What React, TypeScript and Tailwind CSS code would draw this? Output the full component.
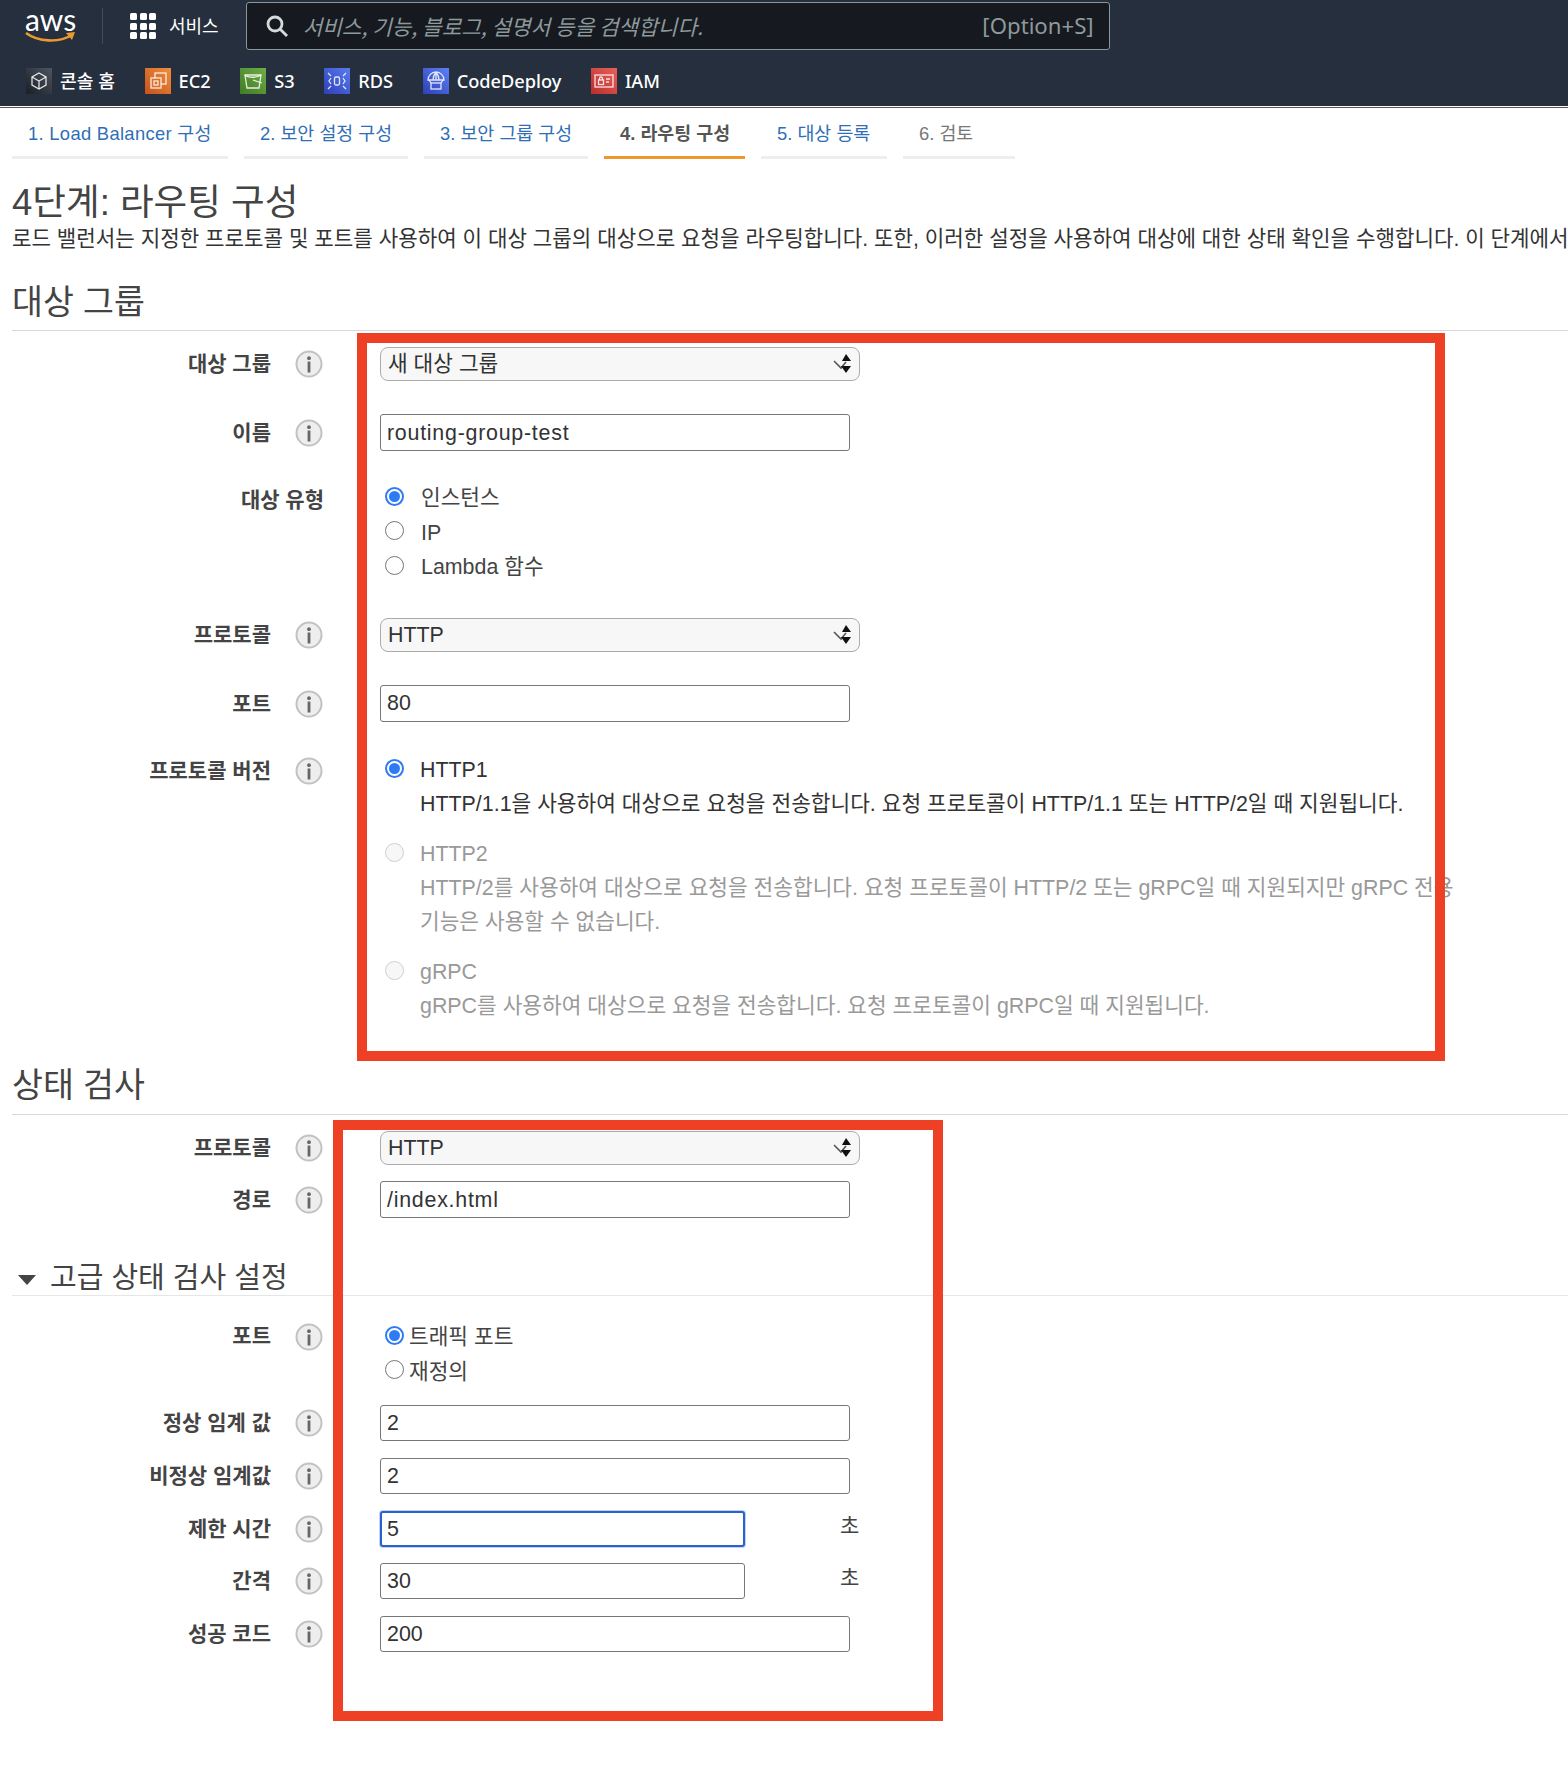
import React from 'react';

const InfoIcon = () => (
  <svg width="28" height="28" viewBox="0 0 28 28" className="shrink-0">
    <circle cx="14" cy="14" r="12.5" fill="#eeeeee" stroke="#c2c2c2" strokeWidth="2" />
    <circle cx="14" cy="8.2" r="1.9" fill="#666" />
    <rect x="12.6" y="11.5" width="2.8" height="11" fill="#666" />
  </svg>
);

const SelectArrows = () => (
  <svg width="18" height="20" viewBox="0 0 18 20" className="shrink-0">
    <path d="M1 7l7 7 5-6" fill="none" stroke="#555" strokeWidth="1.6" />
    <path d="M13 0l5 7h-9z" fill="#111" />
    <path d="M13 19l-5-7h10z" fill="#111" />
  </svg>
);

const Radio = ({ checked, disabled, className = '' }: { checked?: boolean; disabled?: boolean; className?: string }) => (
  <span
    className={`${className} ${
      checked
        ? 'flex w-[19px] h-[19px] shrink-0 items-center justify-center rounded-full border-2 border-[#2f7bf6] bg-white'
        : disabled
          ? 'block w-[19px] h-[19px] shrink-0 rounded-full border border-[#cfcfcf] bg-[#f7f7f7]'
          : 'block w-[19px] h-[19px] shrink-0 rounded-full border-[1.5px] border-[#767676] bg-white'
    }`}
  >
    {checked && <span className="block w-[11px] h-[11px] rounded-full bg-[#2f7bf6]" />}
  </span>
);

const Row = ({
  label,
  className = '',
  children,
}: {
  label: string;
  className?: string;
  children: React.ReactNode;
}) => (
  <div className={`flex items-center ${className}`}>
    <div className="w-[271px] shrink-0 text-right text-[21px] font-bold text-[#444] leading-[28px]">{label}</div>
    <div className="w-[109px] shrink-0 pl-[24px] flex items-center">
      <InfoIcon />
    </div>
    {children}
  </div>
);

const Select = ({ value }: { value: string }) => (
  <div className="w-[480px] h-[34px] flex items-center justify-between pl-[7px] pr-[8px] rounded-lg border border-[#ababab] bg-[#f7f7f7] text-[21.4px] text-[#333]">
    <span>{value}</span>
    <SelectArrows />
  </div>
);

const TextInput = ({
  value,
  width = 'w-[470px]',
  h = 'h-[36px]',
  focused,
  wide,
}: {
  value: string;
  width?: string;
  h?: string;
  focused?: boolean;
  wide?: boolean;
}) => (
  <input
    readOnly
    value={value}
    className={`${width} ${h} rounded-[3px] bg-white text-[21.4px] text-[#333] outline-none ${wide ? 'tracking-[0.75px] pt-[2px]' : ''} ${
      focused ? 'border-2 border-[#2a62c9] px-[5px] shadow-[0_0_0_1px_#bcd3f5]' : 'border border-[#777] px-[6px]'
    }`}
  />
);

const RadioLine = ({ label, checked, gap = 'gap-[17px]' }: { label: string; checked?: boolean; gap?: string }) => (
  <div className={`flex items-center h-[34.5px] pl-[5px] ${gap} text-[21.4px] text-[#444]`}>
    <Radio checked={checked} className="-translate-y-[1px]" />
    <span className="translate-y-[1px]">{label}</span>
  </div>
);

const VersionOption = ({
  title,
  lines,
  checked,
  disabled,
  className = '',
}: {
  title: string;
  lines: string[];
  checked?: boolean;
  disabled?: boolean;
  className?: string;
}) => (
  <div className={`${className} ${disabled ? 'text-[#999]' : 'text-[#333]'} text-[21.4px] leading-[34px]`}>
    <div className="flex items-center pl-[5px] gap-[16px]">
      <Radio checked={checked} disabled={disabled} className="-translate-y-[2px]" />
      <span>{title}</span>
    </div>
    {lines.map((line) => (
      <div key={line} className="pl-[40px] whitespace-nowrap">
        {line}
      </div>
    ))}
  </div>
);

const tabs = [
  { label: '1. Load Balancer 구성', width: 'w-[216px]', color: 'text-[#2f6fb5] tracking-[0.3px]', line: 'border-[#eeeeee]' },
  { label: '2. 보안 설정 구성', width: 'w-[164px]', color: 'text-[#2f6fb5]', line: 'border-[#eeeeee]' },
  { label: '3. 보안 그룹 구성', width: 'w-[164px]', color: 'text-[#2f6fb5]', line: 'border-[#eeeeee]' },
  { label: '4. 라우팅 구성', width: 'w-[141px]', color: 'text-[#555] font-bold', line: 'border-[#f0962e]' },
  { label: '5. 대상 등록', width: 'w-[126px]', color: 'text-[#2f6fb5]', line: 'border-[#eeeeee]' },
  { label: '6. 검토', width: 'w-[112px]', color: 'text-[#777]', line: 'border-[#eeeeee]' },
];

const shortcuts = [
  {
    name: '콘솔 홈',
    bg: 'bg-gradient-to-tr from-[#1a1f27] to-[#4f565f]',
    icon: (
      <>
        <path d="M13 5l7 4v8l-7 4-7-4V9z" />
        <path d="M6 9l7 4 7-4M13 13v8" />
      </>
    ),
  },
  {
    name: 'EC2',
    bg: 'bg-gradient-to-tr from-[#c8511b] to-[#ef8f3c]',
    icon: (
      <>
        <rect x="10" y="5" width="11" height="11" />
        <rect x="6" y="10" width="10" height="10" fill="#d9702a" />
        <rect x="9" y="13" width="4" height="4" />
      </>
    ),
  },
  {
    name: 'S3',
    bg: 'bg-gradient-to-tr from-[#3f7b22] to-[#70ad47]',
    icon: (
      <>
        <path d="M5 7h16l-2 13H7z" />
        <path d="M5 7c3 3 12 3 16 0M13 12l9 3" />
      </>
    ),
  },
  {
    name: 'RDS',
    bg: 'bg-gradient-to-tr from-[#2e3fb8] to-[#5a7bf0]',
    icon: (
      <>
        <rect x="10.5" y="9" width="5" height="8" rx="1.5" />
        <path d="M4 5l3 3M22 5l-3 3M4 21l3-3M22 21l-3-3M7 10l-2 3 2 3M19 10l2 3-2 3" />
      </>
    ),
  },
  {
    name: 'CodeDeploy',
    bg: 'bg-gradient-to-tr from-[#2e3fb8] to-[#5f80f5]',
    icon: (
      <>
        <path d="M5 12a8 8 0 0 1 16 0zM10 12c0-4 1.5-6 3-8 1.5 2 3 4 3 8M13 4v8" />
        <rect x="8" y="15" width="10" height="6" />
        <path d="M6 12l2 3M20 12l-2 3" />
      </>
    ),
  },
  {
    name: 'IAM',
    bg: 'bg-gradient-to-tr from-[#b92d2b] to-[#ea5f5c]',
    icon: (
      <>
        <rect x="4" y="7" width="18" height="12" />
        <rect x="7.5" y="12" width="5" height="4.5" />
        <path d="M8.5 12v-1.5a1.5 1.5 0 0 1 3 0V12M15 11h4M15 14h3" />
      </>
    ),
  },
];

export default function App() {
  return (
    <div className="relative w-[1568px] h-[1768px] overflow-hidden bg-white font-['Liberation_Sans','Noto_Sans_CJK_KR',sans-serif] text-[#333]">
      {/* console header */}
      <header className="h-[106px] bg-[#252f3e] font-['Noto_Sans','Noto_Sans_CJK_KR',sans-serif] text-white">
        <div className="flex h-[53px] items-start pl-[25px] pt-[2px]">
          <div className="relative w-[52px] h-[48px] shrink-0">
            <span className="absolute left-0 top-[2px] text-[30px] leading-[30px] font-['Lato',sans-serif]">aws</span>
            <svg width="52" height="14" viewBox="0 0 52 14" className="absolute left-0 top-[29px]">
              <path d="M1 2c12 9 33 10 46 2" fill="none" stroke="#ec9a2f" strokeWidth="2.6" />
              <path d="M41 2l9-1-3 8z" fill="#ec9a2f" />
            </svg>
          </div>
          <div className="ml-[25px] mt-[6px] w-px h-[36px] bg-[#414d5c]" />
          <div className="ml-[27px] mt-[11px] grid grid-cols-3 gap-[2.5px] w-[26px] shrink-0">
            {Array.from({ length: 9 }).map((_, i) => (
              <span key={i} className="block w-[7px] h-[7px] rounded-[1.5px] bg-white" />
            ))}
          </div>
          <span className="ml-[13px] mt-[9px] text-[18px] leading-[28px] font-['Noto_Sans_CJK_KR',sans-serif]">서비스</span>
          <div className="ml-[27px] w-[864px] h-[48px] flex items-center justify-between rounded-[3px] border border-[#8d9698] bg-[#16191f] pl-[18px] pr-[15px] text-[#8d9a9b]">
            <div className="flex items-center gap-[14px]">
              <svg width="24" height="24" viewBox="0 0 24 24" fill="none" stroke="#d5dbdb" strokeWidth="2.8">
                <circle cx="10" cy="10" r="7" />
                <path d="M15 15l7 7" />
              </svg>
              <span className="text-[21.3px] italic font-['Noto_Sans_CJK_KR',sans-serif]">서비스, 기능, 블로그, 설명서 등을 검색합니다.</span>
            </div>
            <span className="text-[22.2px]">[Option+S]</span>
          </div>
        </div>
        <div className="flex items-center h-[53px] pl-[26px] pt-[4px] gap-[29.6px]">
          {shortcuts.map((s) => (
            <div key={s.name} className="flex items-center gap-[8px]">
              <span className={`block w-[26px] h-[26px] ${s.bg}`}>
                <svg width="26" height="26" viewBox="0 0 26 26" fill="none" stroke="rgba(255,255,255,0.85)" strokeWidth="1.3">
                  {s.icon}
                </svg>
              </span>
              <span className="text-[18.2px] font-medium">{s.name}</span>
            </div>
          ))}
        </div>
      </header>
      <div className="h-px bg-white" />

      {/* wizard tabs */}
      <nav className="flex gap-[16px] pl-[12px] border-t border-[#555]">
        {tabs.map((t) => (
          <div key={t.label} className={`${t.width} h-[51px] pl-[16px] pt-[12px] whitespace-nowrap border-b-[3px] ${t.line} ${t.color} text-[18.4px] leading-[28px]`}>
            {t.label}
          </div>
        ))}
      </nav>

      <main className="pl-[12px]">
        <h1 className="mt-[24px] text-[36.6px] leading-[40px] text-[#444]">4단계: 라우팅 구성</h1>
        <p className="mt-[2px] text-[21.2px] leading-[28px] text-[#333] whitespace-nowrap">
          로드 밸런서는 지정한 프로토콜 및 포트를 사용하여 이 대상 그룹의 대상으로 요청을 라우팅합니다. 또한, 이러한 설정을 사용하여 대상에 대한 상태 확인을 수행합니다. 이 단계에서
        </p>
        <h2 className="mt-[29px] h-[49px] pt-[1px] border-b border-[#d8d8d8] text-[33.6px] leading-[40px] text-[#444]">대상 그룹</h2>
      </main>

      <section>
        <Row label="대상 그룹" className="mt-[16px]">
          <Select value="새 대상 그룹" />
        </Row>
        <Row label="이름" className="mt-[33px]">
          <TextInput value="routing-group-test" h="h-[37px]" wide />
        </Row>
        <div className="flex items-start mt-[29px]">
          <div className="w-[324px] shrink-0 pt-[6px] text-right text-[21px] font-bold text-[#444] leading-[28px]">대상 유형</div>
          <div className="ml-[56px]">
            <RadioLine label="인스턴스" checked />
            <RadioLine label="IP" />
            <RadioLine label="Lambda 함수" />
          </div>
        </div>
        <Row label="프로토콜" className="mt-[34.5px]">
          <Select value="HTTP" />
        </Row>
        <Row label="포트" className="mt-[33px]">
          <TextInput value="80" h="h-[37px]" />
        </Row>
        <div className="flex items-start mt-[31px]">
          <div className="w-[271px] shrink-0 pt-[4px] text-right text-[21px] font-bold text-[#444] leading-[28px]">프로토콜 버전</div>
          <div className="w-[109px] shrink-0 pl-[24px] pt-[4px]">
            <InfoIcon />
          </div>
          <div>
            <VersionOption
              title="HTTP1"
              checked
              lines={['HTTP/1.1을 사용하여 대상으로 요청을 전송합니다. 요청 프로토콜이 HTTP/1.1 또는 HTTP/2일 때 지원됩니다.']}
            />
            <VersionOption
              className="mt-[16px]"
              title="HTTP2"
              disabled
              lines={['HTTP/2를 사용하여 대상으로 요청을 전송합니다. 요청 프로토콜이 HTTP/2 또는 gRPC일 때 지원되지만 gRPC 전용', '기능은 사용할 수 없습니다.']}
            />
            <VersionOption
              className="mt-[16px]"
              title="gRPC"
              disabled
              lines={['gRPC를 사용하여 대상으로 요청을 전송합니다. 요청 프로토콜이 gRPC일 때 지원됩니다.']}
            />
          </div>
        </div>
      </section>

      <section>
        <h2 className="ml-[12px] mt-[42px] h-[50px] pt-[1px] border-b border-[#d8d8d8] text-[33.6px] leading-[40px] text-[#444]">상태 검사</h2>
        <Row label="프로토콜" className="mt-[16px]">
          <Select value="HTTP" />
        </Row>
        <Row label="경로" className="mt-[16px]">
          <TextInput value="/index.html" h="h-[37px]" wide />
        </Row>
        <div className="ml-[12px] mt-[38px] h-[40px] flex items-center gap-[14px] border-b border-[#e6e6e6] pt-[4px]">
          <svg width="18" height="10" viewBox="0 0 18 10" className="ml-[6px] mt-[4px]">
            <path d="M0 0h18L9 10z" fill="#444" />
          </svg>
          <span className="text-[29px] leading-[40px] text-[#444]">고급 상태 검사 설정</span>
        </div>
        <div className="flex items-start mt-[23px]">
          <div className="w-[271px] shrink-0 pt-[3px] text-right text-[21px] font-bold text-[#444] leading-[28px]">포트</div>
          <div className="w-[109px] shrink-0 pl-[24px] pt-[4px]">
            <InfoIcon />
          </div>
          <div>
            <RadioLine label="트래픽 포트" checked gap="gap-[5px]" />
            <RadioLine label="재정의" gap="gap-[5px]" />
          </div>
        </div>
        <Row label="정상 임계 값" className="mt-[17px]">
          <TextInput value="2" />
        </Row>
        <Row label="비정상 임계값" className="mt-[17px]">
          <TextInput value="2" />
        </Row>
        <Row label="제한 시간" className="mt-[17px]">
          <TextInput value="5" width="w-[365px]" focused />
          <span className="ml-[95px] -translate-y-[3px] text-[21px] text-[#444]">초</span>
        </Row>
        <Row label="간격" className="mt-[16px]">
          <TextInput value="30" width="w-[365px]" />
          <span className="ml-[95px] -translate-y-[3px] text-[21px] text-[#444]">초</span>
        </Row>
        <Row label="성공 코드" className="mt-[17px]">
          <TextInput value="200" />
        </Row>
      </section>

      {/* annotation boxes drawn over the screenshot */}
      <div className="absolute left-[357px] top-[333px] w-[1088px] h-[728px] border-[10px] border-[#ee4024] pointer-events-none" />
      <div className="absolute left-[333px] top-[1120px] w-[610px] h-[601px] border-[10px] border-[#ee4024] pointer-events-none" />
    </div>
  );
}
